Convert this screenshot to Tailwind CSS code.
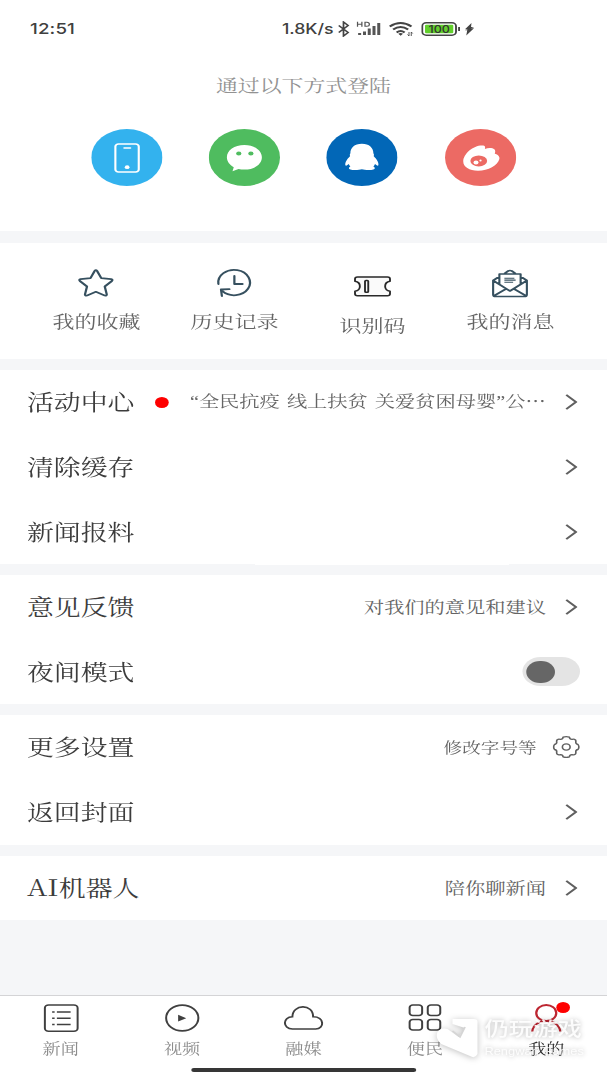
<!DOCTYPE html>
<html lang="zh-CN">
<head>
<meta charset="utf-8">
<title>我的</title>
<script src="https://cdn.jsdelivr.net/npm/@tailwindcss/browser@4"></script>
</head>
<body class="w-[607px] h-[1080px] overflow-hidden bg-[#f5f6f8]">
<!-- The screen is laid out at 485.6px and widened to the full window -->
<div class="relative flex flex-col w-[485.6px] h-[1080px] origin-top-left scale-x-125 whitespace-nowrap text-[#3c3c3c] font-['Noto_Serif_CJK_SC','Liberation_Serif','Noto_Sans_CJK_SC',serif]">

  <!-- Status bar and login -->
  <section class="h-[231px] bg-white shrink-0">
    <div class="flex h-[58px] items-center pl-6 font-['Inter','Liberation_Sans',sans-serif] text-[15px] font-medium text-[#404040]">
      <span class="w-[201.5px] tracking-[0.1px]">12:51</span>
      <span class="w-[44px] text-[14.2px]">1.8K/s</span>
      <svg class="w-[10px] h-4" viewBox="0 0 10 16" fill="none" stroke="#444" stroke-width="1.4"><path d="M1 4.5 8.500 11.500 4.800 15V1l3.700 3.500L1 11.500"/></svg>
      <svg class="ml-[5px] w-[20px] h-4" viewBox="0 0 20 16" fill="#555"><path d="M1.500 12h2.400v2H1.500zM5.400 10.500h2.400V14H5.400zM9.200 7.500h2.400V14H9.200zM13 5h2.400v9H13zM16.800 2h2.400v12h-2.400z"/><path d="M1 .8v5M4.500 .8v5M1 3.300h3.500M7 1.300v4h1.500q2 0 2-2t-2-2z" fill="none" stroke="#555" stroke-width="1"/></svg>
      <svg class="ml-[6px] w-[20px] h-4" viewBox="0 0 20 16" fill="none" stroke="#444" stroke-width="1.9"><path d="M.8 5.500q8.700-7 17.400 0M3.500 8.500q6-5 12 0M6.300 11.400q3.200-2.600 6.400 0"/><path d="m7.600 12.800 1.900 2 1.900-2q-1.900-1.500-3.800 0z" fill="#444" stroke="none"/><path d="M16.200 11v4l-1.200-1.500M18 15v-4l1.200 1.500" stroke-width=".8"/></svg>
      <svg class="ml-[6px] w-[32px] h-4" viewBox="0 0 32 16"><rect x=".8" y="1.800" width="27" height="12.400" rx="3.200" fill="#fff" stroke="#444" stroke-width="1.500"/><rect x="3" y="3.800" width="22.600" height="8.400" rx="1" fill="#62cf2c"/><path d="M29.500 6h1.500v4h-1.500z" fill="#444"/><text x="14.300" y="11.600" text-anchor="middle" font-family="Inter" font-size="10" font-weight="500" fill="#333">100</text></svg>
      <svg class="ml-[2.500px] w-[9px] h-4" viewBox="0 0 9 16" fill="#444"><path d="M6.200 2 1 8.300h2.500L.8 9.300h2L2 14.500l6.200-7.200H5.700l2.700-1.200H5.800z"/></svg>
    </div>
    <h1 class="h-14 leading-[54px] text-center text-[17.5px] text-[#929292]">通过以下方式登陆</h1>
    <div class="mt-[15.300px] mx-auto w-[377.6px] grid grid-cols-4 justify-items-center">
      <svg class="size-[57px]" viewBox="0 0 57 57"><circle cx="28.500" cy="28.500" r="28.500" fill="#33b2ee"/><rect x="19.300" y="15" width="18.700" height="28" rx="2.500" fill="none" stroke="#fff" stroke-width="1.700"/><path d="M26.300 19h5" stroke="#fff" stroke-width="1.500" stroke-linecap="round"/><circle cx="28.700" cy="38.200" r="1.900" fill="#fff"/></svg>
      <svg class="size-[57px]" viewBox="0 0 57 57"><circle cx="28.500" cy="28.500" r="28.500" fill="#4fbc5f"/><path d="M28.500 16c8 0 14 5.200 14 12.300S36.500 40.600 28.500 40.600q-2.500 0-4.700-.7L19 42.300l1-4.100c-3.300-2.300-5.500-5.800-5.500-9.900C14.500 21.200 20.500 16 28.500 16z" fill="#fff"/><circle cx="24" cy="24.500" r="2.100" fill="#4fbc5f"/><circle cx="33.700" cy="24.500" r="2.100" fill="#4fbc5f"/></svg>
      <svg class="size-[57px]" viewBox="0 0 57 57"><circle cx="28.500" cy="28.500" r="28.500" fill="#0267b7"/><path d="M28.500 14.800c-6 0-9.200 4.200-9.200 9.500q-.8 1.200-.3 3c-2.500 3-4.200 6.500-3.700 9 .5 1 1.800-.2 2.700-1.200q.3 1.200 1.300 2.300c-1.600 1-1.500 2.600 0 3.200 2.200.8 7.200.6 9.200-.3 2 .9 7 1.100 9.200.3 1.500-.6 1.600-2.200 0-3.200q1-1.100 1.300-2.300c.9 1 2.200 2.200 2.700 1.200.5-2.500-1.200-6-3.700-9q.5-1.800-.3-3c0-5.300-3.200-9.500-9.200-9.500z" fill="#fff"/></svg>
      <svg class="size-[57px]" viewBox="0 0 57 57"><circle cx="28.500" cy="28.500" r="28.500" fill="#ec6a64"/><path d="M29.500 16.500c2.600-.2 2.900 1.500 2.400 3.500q2.500-1.400 5-1c3 .4 3.900 2.700 2.900 5.700 2.500.8 4.200 2.700 3.700 5.300C42.300 36.300 34.600 41.700 26.400 41.700c-7 0-11.800-3.900-11.800-9.200C14.600 24.800 22.600 16.500 29.500 16.500z" fill="#fff"/><ellipse cx="27" cy="31.900" rx="6.700" ry="5.500" fill="#ec6a64"/><circle cx="24.800" cy="33.400" r="2" fill="#fff"/><circle cx="28.400" cy="31.500" r=".9" fill="#fff"/></svg>
    </div>
  </section>

  <!-- Shortcuts -->
  <section class="mt-3 h-[116px] bg-white shrink-0">
    <div class="mx-auto w-[441.6px] grid grid-cols-4 justify-items-center text-[17.6px] leading-6 text-[#646464]">
      <div class="flex flex-col items-center pt-[23.500px]"><svg class="w-[30px] h-8" viewBox="0 0 30 32" fill="none" stroke="#36505f" stroke-width="1.800" stroke-linejoin="round"><path d="M13.700 4q1-1.600 2 0l3.300 7.100 7.900 1q1.700.5.600 1.900L21.800 19.500l1.600 7.900q0 1.600-1.700 1.100l-7-3.700-7 3.700q-1.700.5-1.700-1.100l1.600-7.900L1.900 14q-1.100-1.400.6-1.900l7.900-1z"/></svg><span class="mt-[10.500px]">我的收藏</span></div>
      <div class="flex flex-col items-center pt-[23.500px]"><svg class="w-[30px] h-8" viewBox="0 0 30 32" fill="none" stroke="#36505f" stroke-width="1.800" stroke-linecap="round" stroke-linejoin="round"><path d="M1.700 17A12.700 12.700 0 1 1 5 24.200M4.500 29l-.7-6.500 6.700-.3M14.500 9v8H21"/></svg><span class="mt-[10.500px]">历史记录</span></div>
      <div class="flex flex-col items-center pt-[23.500px]"><svg class="w-[30px] h-8" viewBox="0 0 30 32" fill="none" stroke="#292929" stroke-width="1.500" stroke-linejoin="round"><path d="M3 10h24q2 0 2 2v2.200c-5.200 1-5.200 9 0 10v2.600q0 2-2 2H3q-2 0-2-2v-2.600c5.200-1 5.200-9 0-10V12q0-2 2-2z" fill="#fafafa"/><rect x="9" y="13.500" width="2.600" height="11.800" rx=".8"/></svg><span class="mt-[14.500px]">识别码</span></div>
      <div class="flex flex-col items-center pt-[23.500px]"><svg class="w-[30px] h-8" viewBox="0 0 30 32" fill="none" stroke="#36505f" stroke-width="1.700" stroke-linejoin="round"><path d="M6.500 9.500 1.500 13.500v14q0 2 2 2h23q2 0 2-2v-14l-5-4M1.500 13.500 15 24l13.500-10.500M2.300 28.700l9.700-7M27.700 28.700l-9.700-7M6.500 17V7h17v10M10.500 6.700l3-2.700q1.500-1 3 0l3 2.700"/><path d="M10.500 11.200h8M10.500 13.100h9M10.500 15.300h7" stroke-width="1.100"/></svg><span class="mt-[10.500px]">我的消息</span></div>
    </div>
  </section>

  <!-- Settings groups -->
  <section class="mt-[11px] h-[194px] bg-white shrink-0 grid grid-rows-3 pl-[21.600px] pr-[23.500px] text-[21.500px]">
    <div class="flex items-center"><span class="-mt-[3px]">活动中心</span><i class="ml-4 size-[11px] rounded-full bg-[#fe0000]"></i><span class="ml-auto -mt-[2px] text-[16.200px] [word-spacing:1.500px] text-[#646464]"><span class="font-['Liberation_Serif']">“</span>全民抗疫 线上扶贫 关爱贫困母婴<span class="font-['Liberation_Serif']">”</span>公<span class="font-['Noto_Sans_CJK_SC']">…</span></span><svg class="ml-[15.500px] w-[10px] h-[18px]" viewBox="0 0 10 18" fill="none" stroke="#606060" stroke-width="1.800"><path d="m1 1.800 7.800 7.200L1 16.200"/></svg></div>
    <div class="flex items-center justify-between"><span class="-mt-[2px]">清除缓存</span><svg class="w-[10px] h-[18px]" viewBox="0 0 10 18" fill="none" stroke="#606060" stroke-width="1.800"><path d="m1 1.800 7.800 7.200L1 16.200"/></svg></div>
    <div class="flex items-center justify-between"><span class="-mt-[2px]">新闻报料</span><svg class="w-[10px] h-[18px]" viewBox="0 0 10 18" fill="none" stroke="#606060" stroke-width="1.800"><path d="m1 1.800 7.800 7.200L1 16.200"/></svg></div>
  </section>
  <section class="mt-[11px] h-[129px] bg-white shrink-0 grid grid-rows-2 pl-[21.600px] pr-[21.600px] text-[21.500px]">
    <div class="flex items-center pr-[1.900px]"><span class="-mt-[2px]">意见反馈</span><span class="ml-auto -mt-[2px] text-[16.200px] text-[#646464]">对我们的意见和建议</span><svg class="ml-[15.300px] w-[10px] h-[18px]" viewBox="0 0 10 18" fill="none" stroke="#606060" stroke-width="1.800"><path d="m1 1.800 7.800 7.200L1 16.200"/></svg></div>
    <div class="flex items-center justify-between"><span class="-mt-[2px]">夜间模式</span><span class="flex items-center w-[46px] h-[29px] rounded-full bg-[#e4e4e4] pl-[3px]"><i class="size-[22.500px] rounded-full bg-[#666]"></i></span></div>
  </section>
  <section class="mt-[11px] h-[130px] bg-white shrink-0 grid grid-rows-2 pl-[21.600px] pr-[21.600px] pb-[1px] text-[21.500px]">
    <div class="flex items-center"><span class="-mt-[3px]">更多设置</span><span class="ml-auto text-[14.900px] text-[#646464]">修改字号等</span><svg class="ml-[12.700px] w-[22px] h-[22px]" viewBox="0 0 22 22" fill="none" stroke="#606060" stroke-width="1.300" stroke-linejoin="round"><path d="M8.500 1.200q2.500-1 5 0 .3 2.400 2.200 2.200 1.500-.8 2.500.4.700.8.400 2.500 0 1.800 1.800 2.200 1.400 2.500 0 5-1.800.4-1.800 2.200.3 1.700-.4 2.500-1 1.200-2.500.4-1.900-.2-2.200 2.200-2.500 1-5 0-.3-2.400-2.200-2.200-1.500.8-2.500-.4-.7-.8-.4-2.500 0-1.800-1.800-2.200-1.400-2.500 0-5 1.800-.4 1.800-2.200-.3-1.700.4-2.500 1-1.200 2.500-.4Q8.200 3.600 8.500 1.200z"/><circle cx="11" cy="11" r="3.100"/></svg></div>
    <div class="flex items-center justify-between pr-[1.900px]"><span class="-mt-[1px]">返回封面</span><svg class="w-[10px] h-[18px]" viewBox="0 0 10 18" fill="none" stroke="#606060" stroke-width="1.800"><path d="m1 1.800 7.800 7.200L1 16.200"/></svg></div>
  </section>
  <section class="mt-[11px] h-[64px] bg-white shrink-0 flex items-center pl-[21.600px] pr-[23.500px] text-[21.500px]">
    <span class="-mt-[2px]"><span class="tracking-[0.200px] text-[22.500px]">AI</span>机器人</span><span class="ml-auto -mt-[2px] text-[16.200px] text-[#646464]">陪你聊新闻</span><svg class="ml-[15.300px] w-[10px] h-[18px]" viewBox="0 0 10 18" fill="none" stroke="#606060" stroke-width="1.800"><path d="m1 1.800 7.800 7.200L1 16.200"/></svg>
  </section>

  <!-- Tab bar -->
  <nav class="relative mt-auto h-[85px] shrink-0 bg-white border-t border-[#d4d4d6] grid grid-cols-5 text-[14.500px] leading-5 text-[#8c8c8c]">
    <div class="flex flex-col items-center pt-[6px]"><svg class="w-8 h-8" viewBox="0 0 32 32" fill="none" stroke="#404040" stroke-width="1.600"><rect x="2.900" y="3" width="26.200" height="26.200" rx="3"/><path d="M12.500 10h11M12.500 16.200h11M12.500 22.500h11M8.700 10h2M8.700 16.200h2M8.700 22.500h2"/></svg><span class="mt-1">新闻</span></div>
    <div class="flex flex-col items-center pt-[6px]"><svg class="w-8 h-8" viewBox="0 0 32 32" fill="none" stroke="#404040" stroke-width="1.600"><circle cx="15.800" cy="16" r="12.900"/><path d="m12.500 12.800 6.500 3.400-6.500 3.400z" fill="#404040" stroke="none"/></svg><span class="mt-1">视频</span></div>
    <div class="flex flex-col items-center pt-[6px]"><svg class="w-8 h-8" viewBox="0 0 32 32" fill="none" stroke="#404040" stroke-width="1.600"><path d="M7 27h18.500c7.300-.2 7.300-12.200-2-12.300C23.500 1.300 7 2 6.900 14.700-1 15-1.200 26.500 7 27z"/></svg><span class="mt-1">融媒</span></div>
    <div class="flex flex-col items-center pt-[6px]"><svg class="w-8 h-8" viewBox="0 0 32 32" fill="none" stroke="#404040" stroke-width="1.600"><rect x="3.700" y="3" width="10" height="10.500" rx="2.500"/><rect x="18.200" y="3" width="10" height="10.500" rx="2.500"/><rect x="3.700" y="17.500" width="10" height="10.500" rx="2.500"/><rect x="18.200" y="17.500" width="10" height="10.500" rx="2.500"/></svg><span class="mt-1">便民</span></div>
    <div class="relative flex flex-col items-center pt-[6px] text-[#303030]"><svg class="w-8 h-8" viewBox="0 0 32 32" fill="none" stroke="#bd2631" stroke-width="1.800"><circle cx="16" cy="11" r="8"/><path d="M4.800 29.500c1.200-14 21.200-14 22.400 0"/></svg><span class="mt-1">我的</span><i class="absolute left-[56.800px] top-[6px] size-[11px] rounded-full bg-[#fe0000]"></i></div>
    <i class="absolute left-[152.800px] top-[71.500px] w-[180px] h-[4.500px] rounded-full bg-[#363636]"></i>
  </nav>

  <!-- Site mark over the tab bar -->
  <div class="absolute left-[348.500px] top-[1016px] flex items-start gap-[6px] text-white/90 font-['Noto_Sans_CJK_SC',sans-serif]">
    <svg class="mt-[2px] w-[33px] h-[42px] overflow-visible drop-shadow-[0_1px_3px_rgba(0,0,0,0.25)]" viewBox="0 0 33 42" fill="#fff"><path d="M1 14q3-5 8-3l9 8 5-9-10-4V1h17q3 0 3 3v32q-2 5-6 2L4 26q-5-6-3-12z"/><path d="m13 13 6 6 4-10" stroke="#d5d5d5" stroke-width="1.500" fill="none"/></svg>
    <div class="[text-shadow:0_0_5px_rgba(0,0,0,0.3)]">
      <div class="text-[19.500px] leading-[24px] font-medium">仍玩游戏</div>
      <div class="mt-[5px] font-['Liberation_Sans',sans-serif] text-[10.300px] leading-[14px]">Rengwan Games</div>
    </div>
  </div>
</div>
</body>
</html>
